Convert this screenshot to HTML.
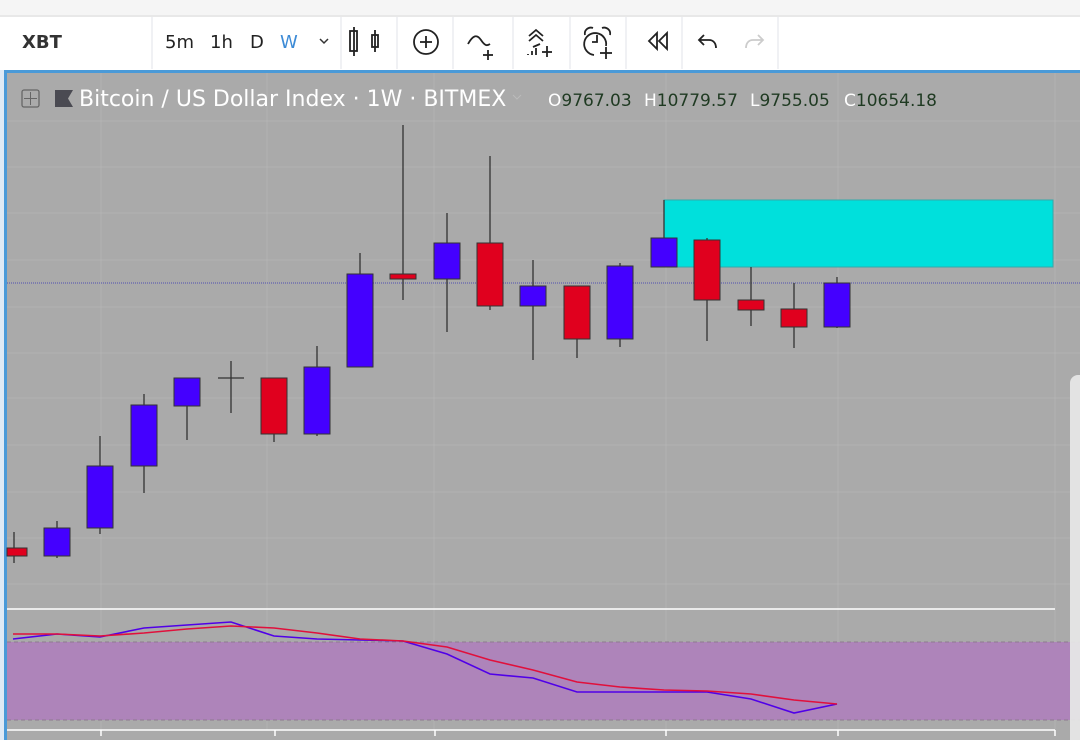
<!DOCTYPE html>
<html><head><style>
body{margin:0;width:1080px;height:740px;overflow:hidden;background:#fff;font-family:"DejaVu Sans","Liberation Sans",sans-serif}
</style></head><body>
<svg width="1080" height="740" xmlns="http://www.w3.org/2000/svg" style="position:absolute;left:0;top:0">
<rect x="0" y="0" width="1080" height="15" fill="#f5f5f5"/>
<rect x="0" y="15" width="1080" height="2" fill="#e8e8e8"/>
<rect x="0" y="17" width="1080" height="53" fill="#fff"/>
<g stroke="#e0e3e8" stroke-width="1">
<line x1="152" y1="17" x2="152" y2="69"/><line x1="341" y1="17" x2="341" y2="69"/><line x1="397" y1="17" x2="397" y2="69"/><line x1="453" y1="17" x2="453" y2="69"/><line x1="513" y1="17" x2="513" y2="69"/><line x1="570" y1="17" x2="570" y2="69"/><line x1="626" y1="17" x2="626" y2="69"/><line x1="682" y1="17" x2="682" y2="69"/><line x1="778" y1="17" x2="778" y2="69"/>
</g>
<text x="22" y="48" font-size="18" font-weight="bold" fill="#333">XBT</text>
<text x="165" y="48" font-size="18" fill="#222">5m</text>
<text x="210" y="48" font-size="18" fill="#222">1h</text>
<text x="250" y="48" font-size="18" fill="#222">D</text>
<text x="280" y="48" font-size="18" fill="#3d8bd6">W</text>
<path d="M320 39l4 4 4-4" stroke="#333" stroke-width="1.5" fill="none"/>
<g stroke="#222" stroke-width="1.8" fill="none">
<line x1="354" y1="27" x2="354" y2="56"/><rect x="350" y="31" width="7" height="20"/>
<line x1="375" y1="30" x2="375" y2="52"/><rect x="372" y="35" width="6" height="12"/>
<circle cx="426" cy="42" r="12"/><line x1="420" y1="42" x2="432" y2="42"/><line x1="426" y1="36" x2="426" y2="48"/>
<path d="M468 44c5-9 9-10 13-4s6 6 9 4"/><line x1="488" y1="50" x2="488" y2="60"/><line x1="483" y1="55" x2="493" y2="55"/>
<path d="M529 36l7-6 7 6M529 41l7-6 7 6M533 47l7-3"/><line x1="528" y1="54" x2="528" y2="55"/><line x1="532" y1="51" x2="532" y2="55"/><line x1="536" y1="48" x2="536" y2="55"/><line x1="547" y1="46" x2="547" y2="57"/><line x1="542" y1="52" x2="552" y2="52"/>
<path d="M606 46a11 11 0 1 0 -12 9"/><path d="M585 35a6 6 0 0 1 8-7M602 28a6 6 0 0 1 8 7"/><path d="M597 35v7h-5"/><line x1="606" y1="47" x2="606" y2="59"/><line x1="600" y1="53" x2="612" y2="53"/>
<path d="M657 33l-8 8 8 8zM667 33l-8 8 8 8z"/>
<path d="M704 35l-5 5 5 5M699 40h10c5 0 7 4 7 8"/>
</g>
<path d="M758 35l5 5-5 5M763 40h-10c-5 0-7 4-7 8" stroke="#ccc" stroke-width="1.8" fill="none"/>
<rect x="0" y="70" width="1080" height="670" fill="#dfeaf5"/>
<rect x="4" y="70" width="1076" height="3" fill="#4a9ad8"/>
<rect x="4" y="70" width="3" height="670" fill="#4a9ad8"/>
<rect x="7" y="73" width="1073" height="667" fill="#aaaaaa"/>
<g stroke="#b3b3b3" stroke-width="1">
<line x1="101" y1="73" x2="101" y2="730"/><line x1="267" y1="73" x2="267" y2="730"/><line x1="434" y1="73" x2="434" y2="730"/><line x1="666" y1="73" x2="666" y2="730"/><line x1="838" y1="73" x2="838" y2="730"/><line x1="1055" y1="73" x2="1055" y2="730"/>
<line x1="7" y1="121" x2="1080" y2="121"/><line x1="7" y1="167" x2="1080" y2="167"/><line x1="7" y1="213" x2="1080" y2="213"/><line x1="7" y1="260" x2="1080" y2="260"/><line x1="7" y1="307" x2="1080" y2="307"/><line x1="7" y1="353" x2="1080" y2="353"/><line x1="7" y1="398" x2="1080" y2="398"/><line x1="7" y1="445" x2="1080" y2="445"/><line x1="7" y1="492" x2="1080" y2="492"/><line x1="7" y1="538" x2="1080" y2="538"/><line x1="7" y1="584" x2="1080" y2="584"/><line x1="7" y1="693" x2="1080" y2="693"/>
</g>
<rect x="664" y="200" width="389" height="67" fill="#00e0dc" stroke="#3aa" stroke-width="1"/>
<line x1="7" y1="283" x2="1080" y2="283" stroke="#5050b0" stroke-width="1" stroke-dasharray="1,1"/>
<g stroke="#333" stroke-width="1.3">
<line x1="14" y1="532" x2="14" y2="563"/><line x1="57" y1="521" x2="57" y2="558"/><line x1="100" y1="436" x2="100" y2="534"/><line x1="144" y1="394" x2="144" y2="493"/><line x1="187" y1="378" x2="187" y2="440"/><line x1="231" y1="361" x2="231" y2="413"/><line x1="218" y1="378" x2="244" y2="378"/><line x1="274" y1="378" x2="274" y2="442"/><line x1="317" y1="346" x2="317" y2="436"/><line x1="360" y1="253" x2="360" y2="367"/><line x1="403" y1="125" x2="403" y2="300"/><line x1="447" y1="213" x2="447" y2="332"/><line x1="490" y1="156" x2="490" y2="310"/><line x1="533" y1="260" x2="533" y2="360"/><line x1="577" y1="286" x2="577" y2="358"/><line x1="620" y1="263" x2="620" y2="347"/><line x1="664" y1="200" x2="664" y2="267"/><line x1="707" y1="238" x2="707" y2="341"/><line x1="751" y1="267" x2="751" y2="326"/><line x1="794" y1="283" x2="794" y2="348"/><line x1="837" y1="277" x2="837" y2="328"/>
</g>
<g stroke="#333" stroke-width="1">
<rect x="7" y="548" width="20" height="8" fill="#e0001e"/>
<rect x="44" y="528" width="26" height="28" fill="#4400ff"/>
<rect x="87" y="466" width="26" height="62" fill="#4400ff"/>
<rect x="131" y="405" width="26" height="61" fill="#4400ff"/>
<rect x="174" y="378" width="26" height="28" fill="#4400ff"/>
<rect x="261" y="378" width="26" height="56" fill="#e0001e"/>
<rect x="304" y="367" width="26" height="67" fill="#4400ff"/>
<rect x="347" y="274" width="26" height="93" fill="#4400ff"/>
<rect x="390" y="274" width="26" height="5" fill="#e0001e"/>
<rect x="434" y="243" width="26" height="36" fill="#4400ff"/>
<rect x="477" y="243" width="26" height="63" fill="#e0001e"/>
<rect x="520" y="286" width="26" height="20" fill="#4400ff"/>
<rect x="564" y="286" width="26" height="53" fill="#e0001e"/>
<rect x="607" y="266" width="26" height="73" fill="#4400ff"/>
<rect x="651" y="238" width="26" height="29" fill="#4400ff"/>
<rect x="694" y="240" width="26" height="60" fill="#e0001e"/>
<rect x="738" y="300" width="26" height="10" fill="#e0001e"/>
<rect x="781" y="309" width="26" height="18" fill="#e0001e"/>
<rect x="824" y="283" width="26" height="44" fill="#4400ff"/>
</g>
<line x1="7" y1="609" x2="1055" y2="609" stroke="#fff" stroke-width="1.5"/>
<rect x="7" y="642" width="1073" height="78" fill="#ae84ba"/>
<line x1="7" y1="642" x2="1080" y2="642" stroke="#8e7a90" stroke-dasharray="4,3"/>
<line x1="7" y1="720" x2="1080" y2="720" stroke="#8e7a90" stroke-dasharray="4,3"/>
<line x1="7" y1="730" x2="1055" y2="730" stroke="#fff" stroke-width="1.5"/>
<g stroke="#fff" stroke-width="1.5"><line x1="101" y1="730" x2="101" y2="736"/><line x1="275" y1="730" x2="275" y2="736"/><line x1="435" y1="730" x2="435" y2="736"/><line x1="666" y1="730" x2="666" y2="736"/><line x1="838" y1="730" x2="838" y2="736"/><line x1="1055" y1="730" x2="1055" y2="736"/></g>
<polyline fill="none" stroke="#5000e8" stroke-width="1.6" points="13,639 57,634 100,637 144,628 187,625 231,622 274,636 317,639 360,640 403,641 447,654 490,674 533,678 577,692 620,692 664,692 707,692 751,699 794,713 837,704"/>
<polyline fill="none" stroke="#e0103c" stroke-width="1.6" points="13,634 57,634 100,636 144,633 187,629 231,626 274,628 317,633 360,639 403,641 447,647 490,660 533,670 577,682 620,687 664,690 707,691 751,694 794,700 837,704"/>
<path d="M1080 375h-2a8 8 0 0 0 -8 8v357h10z" fill="#e6e6e6" fill-opacity="0.95"/>
<rect x="22" y="90" width="17" height="17" rx="2" fill="none" stroke="#666" stroke-width="1.3"/>
<line x1="24" y1="98.5" x2="37" y2="98.5" stroke="#666"/><line x1="30.5" y1="92" x2="30.5" y2="105" stroke="#666"/>
<path d="M55 90h18l-5 8.5 5 8.5h-18z" fill="#4a4a52"/>
<text x="79" y="106" font-size="22" fill="#fff">Bitcoin / US Dollar Index · 1W · BITMEX</text>
<path d="M513 95l4 4 4-4" stroke="#bbb" stroke-width="1" fill="none"/>
<text font-size="17" y="106"><tspan x="548" fill="#fff">O</tspan><tspan fill="#1f3a22">9767.03</tspan><tspan x="644" fill="#fff">H</tspan><tspan fill="#1f3a22">10779.57</tspan><tspan x="750" fill="#fff">L</tspan><tspan fill="#1f3a22">9755.05</tspan><tspan x="844" fill="#fff">C</tspan><tspan fill="#1f3a22">10654.18</tspan></text>
</svg>
</body></html>
